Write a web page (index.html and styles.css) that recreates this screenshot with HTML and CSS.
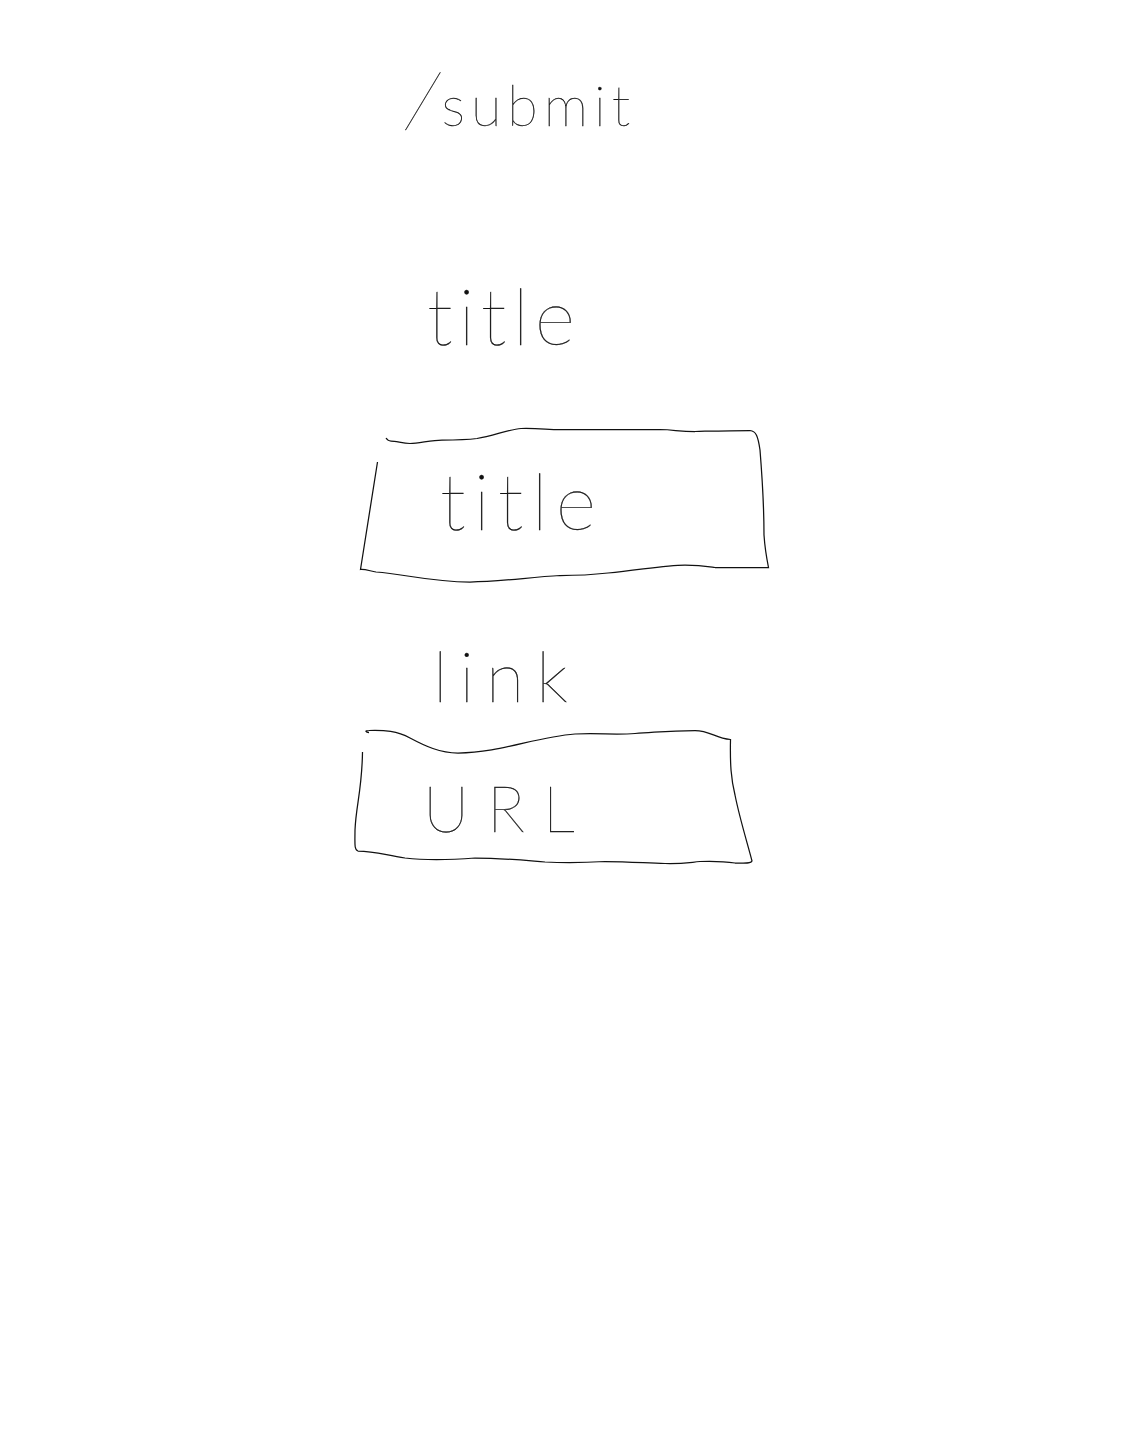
FILE: index.html
```html
<!DOCTYPE html>
<html lang="en">
<head>
<meta charset="utf-8">
<title>Submit</title>
<link rel="stylesheet" href="styles.css">
</head>
<body>
<main class="page">
  <h1 class="heading"><span class="slash">/</span>submit</h1>
  <div class="label label-title">title</div>
  <div class="field field-title">
    <svg class="outline" viewBox="350 420 430 170" aria-hidden="true">
      <path d="M386 438Q388 441 391 441C396 441 402 443 410 443.5C420 443 432 440 442 440C455 440 465 440 477 438.5C493 436 510 429 521 428.5C540 428 550 430 565 429.5L660 429.5C675 430 680 431.5 695 431.5C715 431 730 430.5 750 430.5C756 431 758 436 760 450C762 475 764 500 764 535C765 550 767 560 768.5 567.5L715 567.5C705 566 700 565 685 565C665 565 640 570 608 573C590 575 575 575.5 560 575.5C530 577 500 582 470 582C430 582 405 574 376 572C370 571 365 569 360.5 569.5L377.5 462"/>
    </svg>
    <span class="value value-title">title</span>
  </div>
  <div class="label label-link">link</div>
  <div class="field field-url">
    <svg class="outline" viewBox="350 720 430 150" aria-hidden="true">
      <path d="M369 732.5C366 732.5 364 730.5 369 730.5C385 730 397 731 410 738C425 746 440 753 458 753C500 753 535 737 575 734C600 733 615 735 635 733.5C660 732 670 730.5 695 730.5C710 730.5 715 738 730.5 739.5C730 765 731 778 735 795C740 820 748 845 752 861C751 864 745 863 735 863C722 861 715 861 700 861.5C685 863 680 864 665 863.5C645 863 630 861.5 605 861.5C580 863 565 863 545 862C520 860 500 858 475 858C450 860 430 861 405 858C385 855 375 851 358 851C354 850 355 843 355 830C356 805 362 790 362.5 752"/>
    </svg>
    <span class="value value-url">URL</span>
  </div>
</main>
</body>
</html>
```
FILE: styles.css
```css
* { box-sizing: border-box; }

body {
  margin: 0;
  background: #fff;
  color: #111;
  font-family: Lato, "Open Sans", sans-serif;
  font-weight: 100;
  -webkit-text-stroke: 0.35px #111;
}

.page {
  display: flex;
  flex-direction: column;
  min-height: 1452px;
  padding: 60px 342px 0 350px;
}

.heading {
  margin: 0;
  height: 90px;
  padding-left: 62px;
  font-size: 56px;
  font-weight: 100;
  line-height: 90px;
  letter-spacing: 6px;
  white-space: nowrap;
}

.slash {
  display: inline-block;
  transform: translateY(-6px) skewX(-16deg) scaleY(1.35);
}

.label { line-height: 90px; height: 90px; white-space: nowrap; }

.label-title {
  margin-top: 120px;
  padding-left: 77px;
  font-size: 78px;
  letter-spacing: 6px;
}

.field {
  position: relative;
  display: flex;
  align-items: center;
  width: 430px;
}

.field-title { height: 170px; margin-top: 60px; }

.field-url { height: 150px; }

.outline {
  position: absolute;
  inset: 0;
  width: 100%;
  height: 100%;
  fill: none;
  stroke: #111;
  stroke-width: 1.25;
}

.value { line-height: 90px; }

.value-title {
  padding: 0 0 10px 90px;
  font-size: 78px;
  letter-spacing: 8px;
}

.label-link {
  margin-top: 40px;
  padding-left: 83px;
  font-size: 70px;
  letter-spacing: 12px;
}

.value-url {
  padding: 26px 0 0 73px;
  font-size: 64px;
  letter-spacing: 18px;
}
```
